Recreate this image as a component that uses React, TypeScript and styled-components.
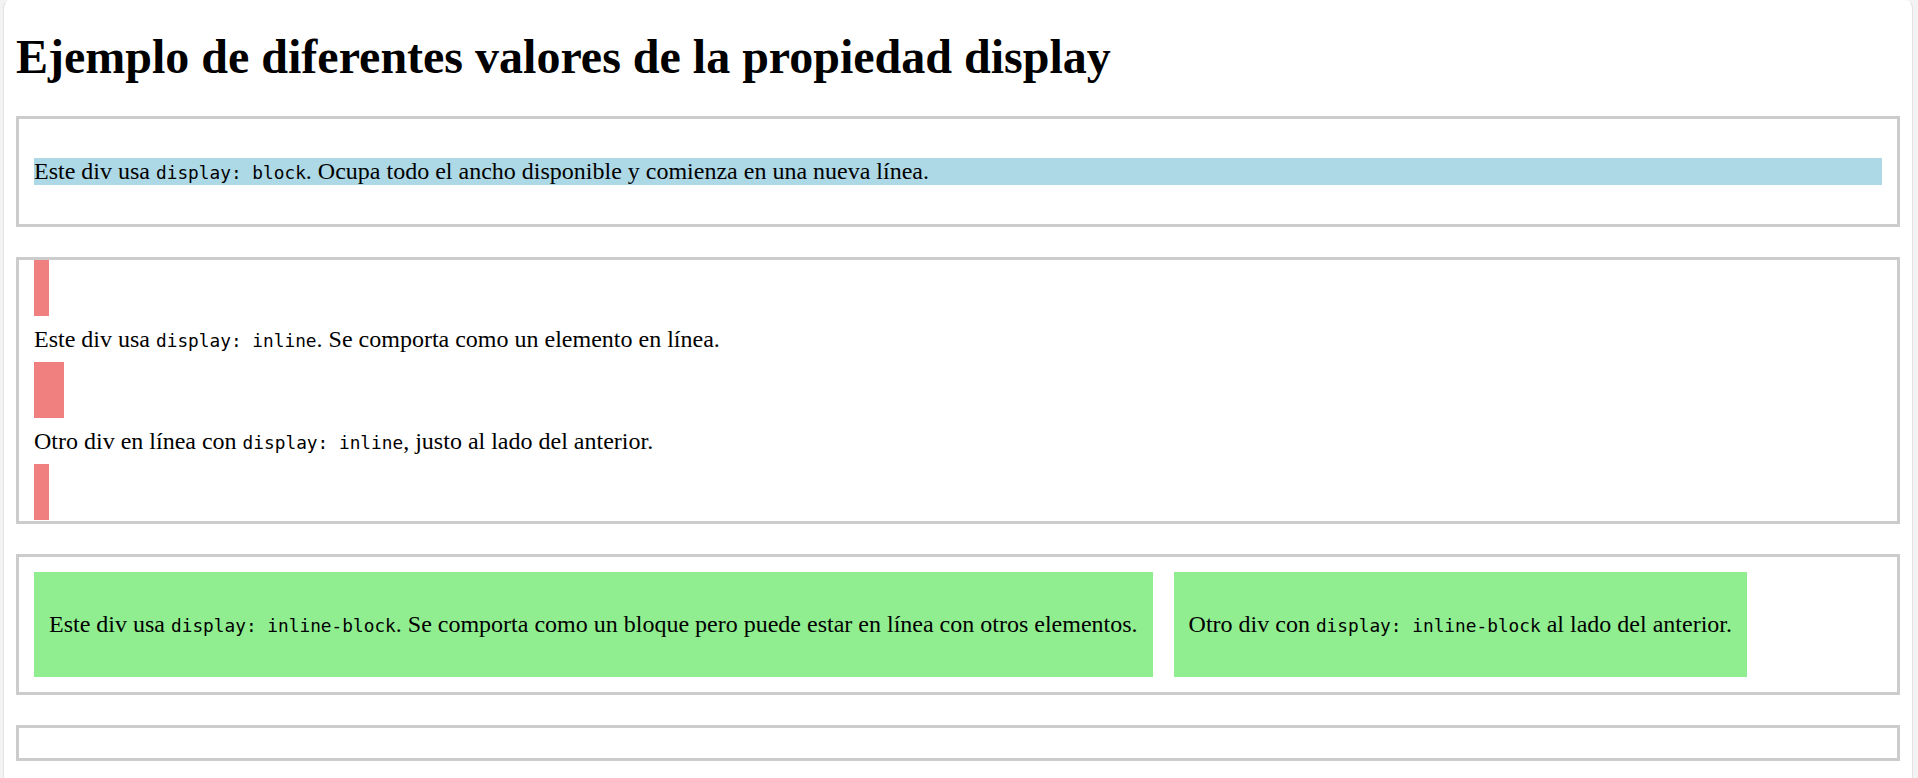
import React from "react";
import styled, { createGlobalStyle } from "styled-components";

const GlobalStyle = createGlobalStyle`
  html, body {
    margin: 0;
    padding: 0;
    background: #f3f3f3;
  }
  body {
    font-family: "Liberation Serif", "Times New Roman", serif;
    font-size: 24px;
    color: #000;
    overflow: hidden;
  }
`;

const Frame = styled.div`
  display: flow-root;
  margin: 0 5px 0 3px;
  min-height: 778px;
  padding: 0 12px;
  background: #ffffff;
  border: 1px solid #e3e3e3;
  border-bottom: none;
  border-top-color: transparent;
  border-radius: 8px 8px 0 0;
`;

const Title = styled.h1`
  font-family: "Liberation Serif", "Times New Roman", serif;
  font-size: 48px;
  font-weight: bold;
  margin: 28px 0 32px;
`;

const DemoBox = styled.section`
  border: 3px solid #cccccc;
  padding: 15px;
  margin-bottom: 30px;
`;

const Para = styled.p`
  margin: 24px 0;
`;

const Code = styled.code`
  font-family: "DejaVu Sans Mono", "Liberation Mono", monospace;
  font-size: 17.8px;
`;

const BlockDemo = styled.div`
  display: block;
  background: #add8e6;
`;

const InlineDemo = styled.div`
  display: inline;
  padding: 15px;
  background: #f08080;
`;

const InlineBlockDemo = styled.div`
  display: inline-block;
  padding: 15px;
  margin-right: 15px;
  background: #90ee90;
`;

export default function App() {
  return (
    <>
      <GlobalStyle />
      <Frame>
        <Title>Ejemplo de diferentes valores de la propiedad display</Title>

        <DemoBox>
          <BlockDemo>
            <Para>
              Este div usa <Code>display: block</Code>. Ocupa todo el ancho
              disponible y comienza en una nueva línea.
            </Para>
          </BlockDemo>
        </DemoBox>

        <DemoBox>
          <InlineDemo>
            <Para>
              Este div usa <Code>display: inline</Code>. Se comporta como un
              elemento en línea.
            </Para>
          </InlineDemo>
          <InlineDemo>
            <Para>
              Otro div en línea con <Code>display: inline</Code>, justo al lado
              del anterior.
            </Para>
          </InlineDemo>
        </DemoBox>

        <DemoBox>
          <InlineBlockDemo>
            <Para>
              Este div usa <Code>display: inline-block</Code>. Se comporta como
              un bloque pero puede estar en línea con otros elementos.
            </Para>
          </InlineBlockDemo>{" "}
          <InlineBlockDemo>
            <Para>
              Otro div con <Code>display: inline-block</Code> al lado del
              anterior.
            </Para>
          </InlineBlockDemo>
        </DemoBox>

        <DemoBox />
      </Frame>
    </>
  );
}
